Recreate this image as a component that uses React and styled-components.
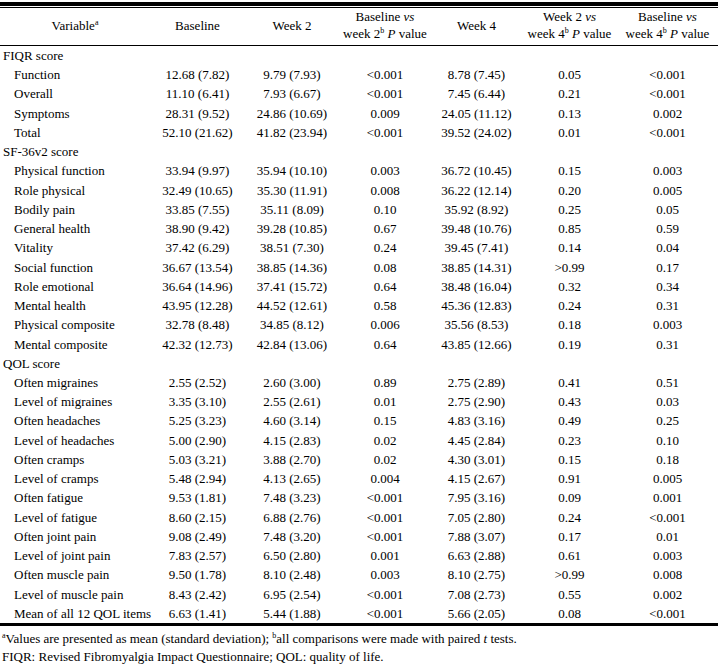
import React from 'react';
import styled, {createGlobalStyle} from 'styled-components';

const GlobalStyle = createGlobalStyle`
  html, body {
    margin: 0;
    padding: 0;
    background: #fff;
  }
  body {
    font-family: "Liberation Serif", "Times New Roman", serif;
    color: #000;
  }
`;

const Page = styled.div`
  width: 718px;
  padding-top: 2px;
`;

const TopRule = styled.div`
  height: 1px;
  border-top: 4px solid #000;
  border-bottom: 1px solid #000;
`;

const Table = styled.table`
  width: 718px;
  border-collapse: collapse;
  table-layout: fixed;
  font-size: 13px;
  border-bottom: 3px solid #000;
`;

const HeadCell = styled.th`
  font-weight: normal;
  text-align: center;
  vertical-align: middle;
  line-height: 17px;
  height: 34px;
  padding: 0 0 3px;
  border-bottom: 1px solid #000;
`;

const Cell = styled.td`
  padding: 0 0 0 ${p => (p.$indent ? 14 : p.$section ? 3 : 0)}px;
  height: 19.24px;
  line-height: 19.24px;
  text-align: ${p => (p.$label ? 'left' : 'center')};
  white-space: nowrap;
`;

const Sup = styled.sup`
  font-size: 8px;
  vertical-align: 5px;
  line-height: 0;
`;

const Notes = styled.div`
  font-size: 13px;
  line-height: 18px;
  padding: 4px 0 0 2px;
`;

const widths = [150, 95, 94, 92, 91, 95, 101];

const sections = [
  {
    title: 'FIQR score',
    rows: [
      ['Function', '12.68 (7.82)', '9.79 (7.93)', '<0.001', '8.78 (7.45)', '0.05', '<0.001'],
      ['Overall', '11.10 (6.41)', '7.93 (6.67)', '<0.001', '7.45 (6.44)', '0.21', '<0.001'],
      ['Symptoms', '28.31 (9.52)', '24.86 (10.69)', '0.009', '24.05 (11.12)', '0.13', '0.002'],
      ['Total', '52.10 (21.62)', '41.82 (23.94)', '<0.001', '39.52 (24.02)', '0.01', '<0.001'],
    ],
  },
  {
    title: 'SF-36v2 score',
    rows: [
      ['Physical function', '33.94 (9.97)', '35.94 (10.10)', '0.003', '36.72 (10.45)', '0.15', '0.003'],
      ['Role physical', '32.49 (10.65)', '35.30 (11.91)', '0.008', '36.22 (12.14)', '0.20', '0.005'],
      ['Bodily pain', '33.85 (7.55)', '35.11 (8.09)', '0.10', '35.92 (8.92)', '0.25', '0.05'],
      ['General health', '38.90 (9.42)', '39.28 (10.85)', '0.67', '39.48 (10.76)', '0.85', '0.59'],
      ['Vitality', '37.42 (6.29)', '38.51 (7.30)', '0.24', '39.45 (7.41)', '0.14', '0.04'],
      ['Social function', '36.67 (13.54)', '38.85 (14.36)', '0.08', '38.85 (14.31)', '>0.99', '0.17'],
      ['Role emotional', '36.64 (14.96)', '37.41 (15.72)', '0.64', '38.48 (16.04)', '0.32', '0.34'],
      ['Mental health', '43.95 (12.28)', '44.52 (12.61)', '0.58', '45.36 (12.83)', '0.24', '0.31'],
      ['Physical composite', '32.78 (8.48)', '34.85 (8.12)', '0.006', '35.56 (8.53)', '0.18', '0.003'],
      ['Mental composite', '42.32 (12.73)', '42.84 (13.06)', '0.64', '43.85 (12.66)', '0.19', '0.31'],
    ],
  },
  {
    title: 'QOL score',
    rows: [
      ['Often migraines', '2.55 (2.52)', '2.60 (3.00)', '0.89', '2.75 (2.89)', '0.41', '0.51'],
      ['Level of migraines', '3.35 (3.10)', '2.55 (2.61)', '0.01', '2.75 (2.90)', '0.43', '0.03'],
      ['Often headaches', '5.25 (3.23)', '4.60 (3.14)', '0.15', '4.83 (3.16)', '0.49', '0.25'],
      ['Level of headaches', '5.00 (2.90)', '4.15 (2.83)', '0.02', '4.45 (2.84)', '0.23', '0.10'],
      ['Often cramps', '5.03 (3.21)', '3.88 (2.70)', '0.02', '4.30 (3.01)', '0.15', '0.18'],
      ['Level of cramps', '5.48 (2.94)', '4.13 (2.65)', '0.004', '4.15 (2.67)', '0.91', '0.005'],
      ['Often fatigue', '9.53 (1.81)', '7.48 (3.23)', '<0.001', '7.95 (3.16)', '0.09', '0.001'],
      ['Level of fatigue', '8.60 (2.15)', '6.88 (2.76)', '<0.001', '7.05 (2.80)', '0.24', '<0.001'],
      ['Often joint pain', '9.08 (2.49)', '7.48 (3.20)', '<0.001', '7.88 (3.07)', '0.17', '0.01'],
      ['Level of joint pain', '7.83 (2.57)', '6.50 (2.80)', '0.001', '6.63 (2.88)', '0.61', '0.003'],
      ['Often muscle pain', '9.50 (1.78)', '8.10 (2.48)', '0.003', '8.10 (2.75)', '>0.99', '0.008'],
      ['Level of muscle pain', '8.43 (2.42)', '6.95 (2.54)', '<0.001', '7.08 (2.73)', '0.55', '0.002'],
      ['Mean of all 12 QOL items', '6.63 (1.41)', '5.44 (1.88)', '<0.001', '5.66 (2.05)', '0.08', '<0.001'],
    ],
  },
];

const App = () => (
  <Page>
    <GlobalStyle />
    <TopRule />
    <Table>
      <colgroup>
        {widths.map((w, i) => (
          <col key={i} style={{width: w}} />
        ))}
      </colgroup>
      <thead>
        <tr>
          <HeadCell>Variable<Sup>a</Sup></HeadCell>
          <HeadCell>Baseline</HeadCell>
          <HeadCell>Week 2</HeadCell>
          <HeadCell>
            Baseline <i>vs</i>
            <br />
            week 2<Sup>b</Sup> <i>P</i> value
          </HeadCell>
          <HeadCell>Week 4</HeadCell>
          <HeadCell>
            Week 2 <i>vs</i>
            <br />
            week 4<Sup>b</Sup> <i>P</i> value
          </HeadCell>
          <HeadCell>
            Baseline <i>vs</i>
            <br />
            week 4<Sup>b</Sup> <i>P</i> value
          </HeadCell>
        </tr>
      </thead>
      <tbody>
        {sections.map(section => (
          <React.Fragment key={section.title}>
            <tr>
              <Cell $label $section colSpan={7}>{section.title}</Cell>
            </tr>
            {section.rows.map(([label, ...values]) => (
              <tr key={label}>
                <Cell $label $indent>{label}</Cell>
                {values.map((v, i) => (
                  <Cell key={i}>{v}</Cell>
                ))}
              </tr>
            ))}
          </React.Fragment>
        ))}
      </tbody>
    </Table>
    <Notes>
      <div>
        <Sup>a</Sup>Values are presented as mean (standard deviation); <Sup>b</Sup>all comparisons were
        made with paired <i>t</i> tests.
      </div>
      <div>FIQR: Revised Fibromyalgia Impact Questionnaire; QOL: quality of life.</div>
    </Notes>
  </Page>
);

export default App;
